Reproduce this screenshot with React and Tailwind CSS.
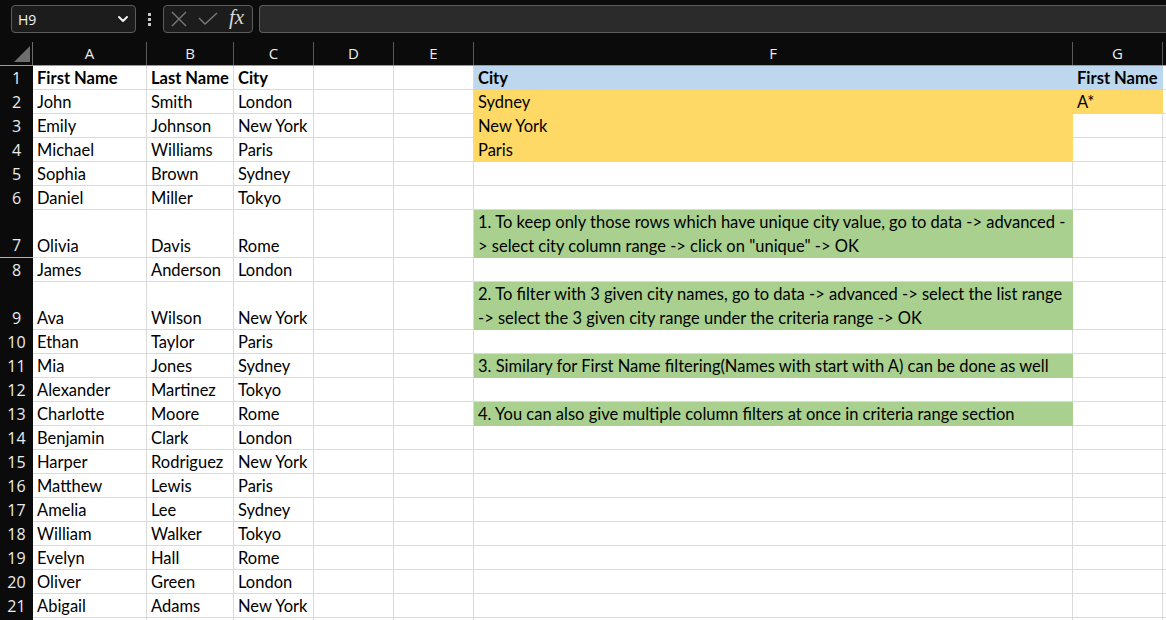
import React from "react";

const BLUE = "bg-[#bdd7ee]";
const YELLOW = "bg-[#ffd966]";
const GREEN = "bg-[#a9d08e]";

// widths of A..G (H runs off the right edge)
const cols = [
  { key: "A", w: "w-[114px]" },
  { key: "B", w: "w-[87px]" },
  { key: "C", w: "w-[80px]" },
  { key: "D", w: "w-[80px]" },
  { key: "E", w: "w-[80px]" },
  { key: "F", w: "w-[599px]" },
  { key: "G", w: "w-[90px]" },
];

const people = [
  ["John", "Smith", "London"],
  ["Emily", "Johnson", "New York"],
  ["Michael", "Williams", "Paris"],
  ["Sophia", "Brown", "Sydney"],
  ["Daniel", "Miller", "Tokyo"],
  ["Olivia", "Davis", "Rome"],
  ["James", "Anderson", "London"],
  ["Ava", "Wilson", "New York"],
  ["Ethan", "Taylor", "Paris"],
  ["Mia", "Jones", "Sydney"],
  ["Alexander", "Martinez", "Tokyo"],
  ["Charlotte", "Moore", "Rome"],
  ["Benjamin", "Clark", "London"],
  ["Harper", "Rodriguez", "New York"],
  ["Matthew", "Lewis", "Paris"],
  ["Amelia", "Lee", "Sydney"],
  ["William", "Walker", "Tokyo"],
  ["Evelyn", "Hall", "Rome"],
  ["Oliver", "Green", "London"],
  ["Abigail", "Adams", "New York"],
];

// extra cells in F / G, keyed by row number
const extras = {
  1: { F: { text: ["City"], bg: BLUE, bold: true }, G: { text: ["First Name"], bg: BLUE, bold: true } },
  2: { F: { text: ["Sydney"], bg: YELLOW }, G: { text: ["A*"], bg: YELLOW } },
  3: { F: { text: ["New York"], bg: YELLOW } },
  4: { F: { text: ["Paris"], bg: YELLOW } },
  7: {
    F: {
      text: [
        "1. To keep only those rows which have unique city value, go to data -> advanced -",
        '> select city column range -> click on "unique" -> OK',
      ],
      bg: GREEN,
    },
  },
  9: {
    F: {
      text: [
        "2. To filter with 3 given city names, go to data -> advanced -> select the list range",
        "-> select the 3 given city range under the criteria range -> OK",
      ],
      bg: GREEN,
    },
  },
  11: { F: { text: ["3. Similary for First Name filtering(Names with start with A) can be done as well"], bg: GREEN } },
  13: { F: { text: ["4. You can also give multiple column filters at once in criteria range section"], bg: GREEN } },
};

const rows = [
  { n: 1, cells: ["First Name", "Last Name", "City"], bold: true },
  ...people.map((p, i) => ({ n: i + 2, cells: p })),
  { n: 22, cells: ["", "", ""], hidden: true },
];

const Cell = ({ w, h, bg, bold, lines }) => (
  <div
    className={`${w} ${h} shrink-0 flex flex-col justify-end pl-[4px] whitespace-nowrap overflow-visible border-r border-b ${
      bg ? `${bg} border-transparent` : "border-[#dadada]"
    } ${bold ? "font-bold" : ""}`}
  >
    {lines.map((l, i) => (
      <div key={i} className="leading-[24px] h-[24px] pt-[1px]">
        {l}
      </div>
    ))}
  </div>
);

const TopBar = () => (
  <div className="h-[42px] bg-[#0b0b0b] flex items-start pt-[5px] pl-[11px]">
    <div className="w-[125px] h-[28px] rounded-[4px] border border-[#5c5c5c] bg-[#1c1c1c] flex items-center justify-between pl-[6px] pr-[6px] text-[#f2f2f2] text-[14px] font-['Open_Sans',sans-serif]">
      <span>H9</span>
      <svg width="12" height="8" viewBox="0 0 12 8" fill="none">
        <path d="M2 2 L6 6 L10 2" stroke="#f0f0f0" strokeWidth="2" strokeLinecap="round" strokeLinejoin="round" />
      </svg>
    </div>
    <div className="w-[27px] h-[28px] flex flex-col items-center justify-center gap-[2px]">
      <span className="w-[3px] h-[3px] bg-[#c8c8c8]" />
      <span className="w-[3px] h-[3px] bg-[#c8c8c8]" />
      <span className="w-[3px] h-[3px] bg-[#c8c8c8]" />
    </div>
    <div className="w-[90px] h-[28px] rounded-[4px] border border-[#5c5c5c] bg-[#1c1c1c] flex items-center pl-[7px]">
      <svg width="16" height="16" viewBox="0 0 16 16" fill="none">
        <path d="M1 1 L15 15 M15 1 L1 15" stroke="#7a7a7a" strokeWidth="1.4" />
      </svg>
      <svg className="ml-[11px]" width="20" height="14" viewBox="0 0 20 14" fill="none">
        <path d="M1 6 L7 12 L19 1" stroke="#7a7a7a" strokeWidth="1.4" />
      </svg>
      <span className="ml-[11px] text-[#d8d8d8] italic text-[21px] leading-none font-['Liberation_Serif',serif] -mt-[3px]">
        fx
      </span>
    </div>
    <div className="ml-[6px] flex-1 h-[28px] rounded-l-[4px] border border-r-0 border-[#5c5c5c] bg-[#2b2b2b]" />
  </div>
);

const ColumnHeaders = () => (
  <div className="h-[24px] flex bg-[#0b0b0b] border-b border-[#9a9a9a] text-[#ececec] text-[15px] font-['Open_Sans',sans-serif]">
    <div className="w-[33px] shrink-0 relative border-r border-[#6a6a6a]">
      <svg className="absolute left-[14px] top-[4px]" width="16" height="16" viewBox="0 0 16 16">
        <polygon points="16,0 16,16 0,16" fill="#6e6e6e" />
      </svg>
    </div>
    {cols.map((c) => (
      <div key={c.key} className={`${c.w} shrink-0 flex items-center justify-center border-r border-[#5a5a5a] leading-none`}>
        {c.key}
      </div>
    ))}
    <div className="flex-1" />
  </div>
);

export default function App() {
  return (
    <div className="w-[1166px] h-[620px] overflow-hidden bg-white">
      <TopBar />
      <ColumnHeaders />
      <div className="font-['Lato',sans-serif] text-[16.5px] text-black">
        {rows.map((r) => {
          const ex = extras[r.n] || {};
          const tall = (ex.F && ex.F.text.length > 1) || false;
          const h = tall ? "h-[48px]" : "h-[24px]";
          return (
            <div key={r.n} className="flex">
              <div
                className={`w-[33px] ${h} shrink-0 bg-[#0b0b0b] text-[#ececec] text-[16px] font-['Open_Sans',sans-serif] flex items-end justify-center leading-[24px] ${
                  r.n === 7 ? "border-b border-[#b0b0b0]" : ""
                }`}
              >
                {r.hidden ? "" : r.n}
              </div>
              <Cell w="w-[114px]" h={h} bold={r.bold} lines={[r.cells[0]]} />
              <Cell w="w-[87px]" h={h} bold={r.bold} lines={[r.cells[1]]} />
              <Cell w="w-[80px]" h={h} bold={r.bold} lines={[r.cells[2]]} />
              <Cell w="w-[80px]" h={h} lines={[""]} />
              <Cell w="w-[80px]" h={h} lines={[""]} />
              <Cell w="w-[599px]" h={h} bg={ex.F?.bg} bold={ex.F?.bold} lines={ex.F ? ex.F.text : [""]} />
              <Cell w="w-[90px]" h={h} bg={ex.G?.bg} bold={ex.G?.bold} lines={ex.G ? ex.G.text : [""]} />
              <div className={`flex-1 ${h} border-b border-[#dadada]`} />
            </div>
          );
        })}
      </div>
    </div>
  );
}
